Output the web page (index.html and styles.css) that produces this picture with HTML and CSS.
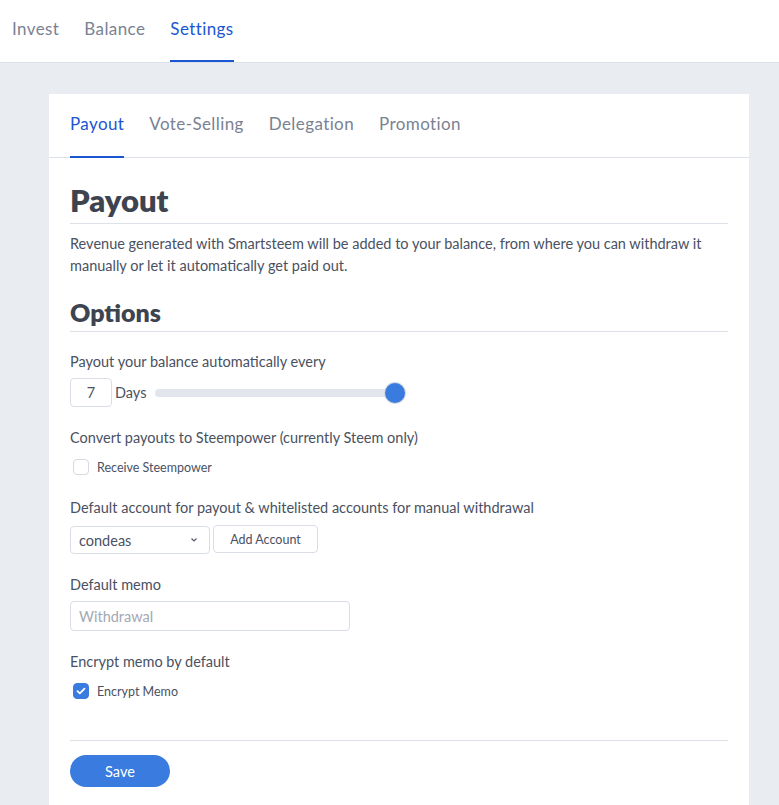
FILE: index.html
```html
<!DOCTYPE html>
<html lang="en">
<head>
    <meta charset="UTF-8">
    <meta name="viewport" content="width=device-width, initial-scale=1.0">
    <title>Smartsteem Settings</title>
    <link rel="stylesheet" href="styles.css">
</head>
<body>
    <nav class="topnav">
        <a href="#">Invest</a>
        <a href="#">Balance</a>
        <a href="#" class="active">Settings</a>
    </nav>

    <main class="page">
        <div class="card">
            <nav class="tabs">
                <a href="#" class="active">Payout</a>
                <a href="#">Vote-Selling</a>
                <a href="#">Delegation</a>
                <a href="#">Promotion</a>
            </nav>

            <div class="content">
                <h1>Payout</h1>
                <p class="intro">Revenue generated with Smartsteem will be added to your balance, from where you can withdraw it manually or let it automatically get paid out.</p>

                <h2>Options</h2>

                <div class="field">
                    <label>Payout your balance automatically every</label>
                    <div class="row">
                        <input type="text" class="days" value="7">
                        <span class="unit">Days</span>
                        <div class="slider">
                            <div class="thumb"></div>
                        </div>
                    </div>
                </div>

                <div class="field">
                    <label>Convert payouts to Steempower (currently Steem only)</label>
                    <div class="check">
                        <span class="box"></span>
                        <span>Receive Steempower</span>
                    </div>
                </div>

                <div class="field">
                    <label>Default account for payout &amp; whitelisted accounts for manual withdrawal</label>
                    <div class="row">
                        <div class="select">
                            <span>condeas</span>
                            <svg width="8" height="6" viewBox="0 0 8 6"><path d="M1.5 1.5 L4 4 L6.5 1.5" fill="none" stroke="#555c6a" stroke-width="1.2"/></svg>
                        </div>
                        <button type="button" class="btn-light">Add Account</button>
                    </div>
                </div>

                <div class="field">
                    <label>Default memo</label>
                    <input type="text" class="memo" placeholder="Withdrawal">
                </div>

                <div class="field">
                    <label>Encrypt memo by default</label>
                    <div class="check">
                        <span class="box checked">
                            <svg width="10" height="8" viewBox="0 0 10 8"><path d="M1.5 4.2 L3.8 6.3 L8.5 1.6" fill="none" stroke="#fff" stroke-width="1.8" stroke-linecap="round" stroke-linejoin="round"/></svg>
                        </span>
                        <span>Encrypt Memo</span>
                    </div>
                </div>

                <div class="actions">
                    <button type="button" class="btn-save">Save</button>
                </div>
            </div>
        </div>
    </main>
</body>
</html>
```

FILE: styles.css
```css
body {
    font-family: Lato, "Noto Sans", Arial, sans-serif;
    background-color: #e9edf2;
    color: #4a5162;
    margin: 0;
    padding: 0;
}

a {
    text-decoration: none;
}

.topnav {
    display: flex;
    gap: 25px;
    height: 63px;
    padding-left: 12px;
    background-color: #fff;
    border-bottom: 1px solid #dde2ea;
    box-sizing: border-box;
}

.topnav a {
    display: flex;
    align-items: center;
    font-size: 17px;
    letter-spacing: 0.4px;
    color: #7a8293;
    border-bottom: 2px solid transparent;
    padding-bottom: 3px;
}

.topnav a.active {
    color: #1a56d2;
    border-bottom-color: #1a56d2;
}

.page {
    padding: 31px 30px 0 49px;
}

.card {
    background-color: #fff;
    width: 700px;
}

.tabs {
    display: flex;
    gap: 25px;
    height: 64px;
    padding-left: 21px;
    border-bottom: 1px solid #dde2ea;
    box-sizing: border-box;
}

.tabs a {
    display: flex;
    align-items: center;
    font-size: 17px;
    letter-spacing: 0.4px;
    color: #7a8293;
    border-bottom: 2px solid transparent;
    margin-bottom: -1px;
    padding-bottom: 3px;
}

.tabs a.active {
    color: #1a56d2;
    border-bottom-color: #1a56d2;
}

.content {
    padding: 24px 21px 40px 21px;
}

h1 {
    font-size: 31px;
    font-weight: 800;
    color: #3e4350;
    margin: 0;
    padding-bottom: 5px;
    border-bottom: 1px solid #dde2ea;
    line-height: 36px;
}

.intro {
    font-size: 14.5px;
    line-height: 22px;
    margin: 9px 0 19px 0;
}

h2 {
    font-size: 25px;
    font-weight: 800;
    color: #3e4350;
    margin: 0;
    padding-bottom: 3px;
    border-bottom: 1px solid #dde2ea;
    line-height: 32px;
}

.field {
    margin-top: 20px;
}

.field + .field {
    margin-top: 21px;
}

.field:has(.check) {
    padding-bottom: 2px;
}

label {
    display: block;
    font-size: 14.5px;
    line-height: 20px;
    margin-bottom: 6px;
}

.row {
    display: flex;
    align-items: center;
    gap: 3px;
}

.days {
    width: 42px;
    height: 29px;
    box-sizing: border-box;
    border: 1px solid #d9dee6;
    border-radius: 4px;
    text-align: center;
    font-family: inherit;
    font-size: 14.5px;
    color: #4a5162;
}

.unit {
    font-size: 14.5px;
    margin-right: 5px;
}

.slider {
    position: relative;
    width: 250px;
    height: 8px;
    background-color: #e1e5ec;
    border-radius: 4px;
}

.thumb {
    position: absolute;
    right: 0;
    top: -6px;
    width: 20px;
    height: 20px;
    border-radius: 50%;
    background-color: #3a7be0;
    box-shadow: 0 0 0 1px #d6dae0;
}

.check {
    display: flex;
    align-items: center;
    gap: 8px;
    padding-left: 3px;
    font-size: 12.5px;
    margin-top: 11px;
}

.box {
    display: flex;
    align-items: center;
    justify-content: center;
    width: 16px;
    height: 16px;
    box-sizing: border-box;
    border: 1px solid #d4d9e2;
    border-radius: 4px;
}

.box.checked {
    background-color: #3a7be0;
    border-color: #3a7be0;
}

.select {
    display: flex;
    align-items: center;
    justify-content: space-between;
    width: 140px;
    height: 28px;
    box-sizing: border-box;
    padding: 0 11px 0 8px;
    border: 1px solid #d9dee6;
    border-radius: 4px;
    font-size: 14.5px;
    margin-top: 2px;
}

.btn-light {
    width: 105px;
    height: 28px;
    background-color: #fff;
    border: 1px solid #d9dee6;
    border-radius: 4px;
    font-family: inherit;
    font-size: 12.5px;
    color: #4a5162;
}

.memo {
    display: block;
    width: 280px;
    height: 30px;
    box-sizing: border-box;
    border: 1px solid #d9dee6;
    border-radius: 4px;
    padding: 0 8px;
    font-family: inherit;
    font-size: 14.5px;
}

.memo::placeholder {
    color: #a3a8b2;
}

.actions {
    margin-top: 39px;
    border-top: 1px solid #dde2ea;
    padding-top: 14px;
}

.btn-save {
    width: 100px;
    height: 32px;
    border: none;
    border-radius: 16px;
    background-color: #3a7be0;
    color: #fff;
    font-family: inherit;
    font-size: 14.5px;
    cursor: pointer;
}
```
